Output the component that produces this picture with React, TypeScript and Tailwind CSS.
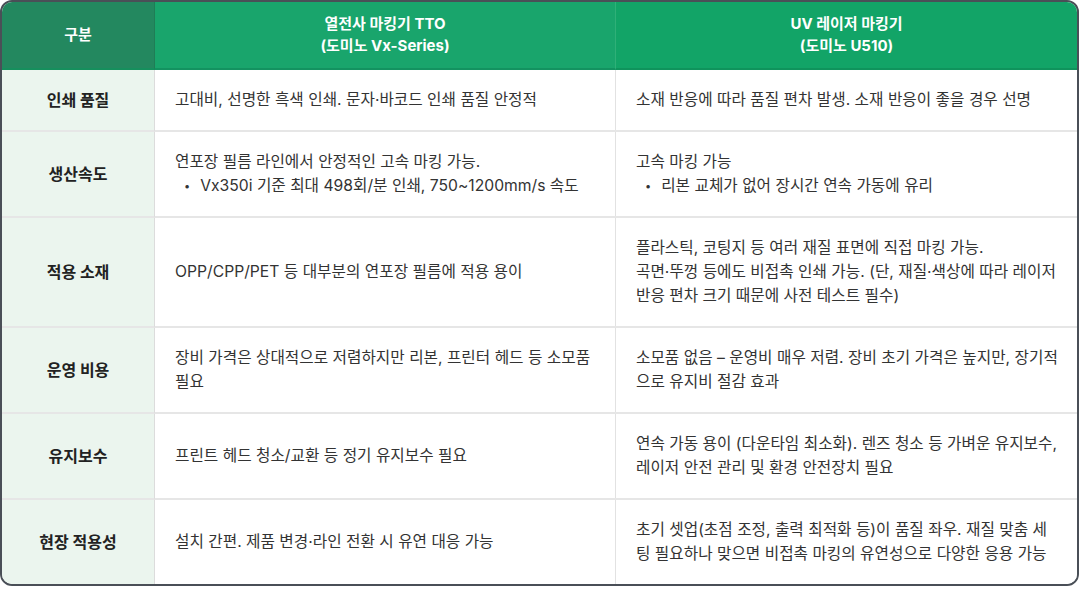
import React from "react";

type Cell = { text: string; bullets?: string[] };
type Row = { label: string; a: Cell; b: Cell };

const rows: Row[] = [
  {
    label: "인쇄 품질",
    a: { text: "고대비, 선명한 흑색 인쇄. 문자·바코드 인쇄 품질 안정적" },
    b: { text: "소재 반응에 따라 품질 편차 발생. 소재 반응이 좋을 경우 선명" },
  },
  {
    label: "생산속도",
    a: {
      text: "연포장 필름 라인에서 안정적인 고속 마킹 가능.",
      bullets: ["Vx350i 기준 최대 498회/분 인쇄, 750~1200mm/s 속도"],
    },
    b: { text: "고속 마킹 가능", bullets: ["리본 교체가 없어 장시간 연속 가동에 유리"] },
  },
  {
    label: "적용 소재",
    a: { text: "OPP/CPP/PET 등 대부분의 연포장 필름에 적용 용이" },
    b: {
      text: "플라스틱, 코팅지 등 여러 재질 표면에 직접 마킹 가능.\n곡면·뚜껑 등에도 비접촉 인쇄 가능. (단, 재질·색상에 따라 레이저 반응 편차 크기 때문에 사전 테스트 필수)",
    },
  },
  {
    label: "운영 비용",
    a: { text: "장비 가격은 상대적으로 저렴하지만 리본, 프린터 헤드 등 소모품 필요" },
    b: { text: "소모품 없음 – 운영비 매우 저렴. 장비 초기 가격은 높지만, 장기적으로 유지비 절감 효과" },
  },
  {
    label: "유지보수",
    a: { text: "프린트 헤드 청소/교환 등 정기 유지보수 필요" },
    b: { text: "연속 가동 용이 (다운타임 최소화). 렌즈 청소 등 가벼운 유지보수, 레이저 안전 관리 및 환경 안전장치 필요" },
  },
  {
    label: "현장 적용성",
    a: { text: "설치 간편. 제품 변경·라인 전환 시 유연 대응 가능" },
    b: { text: "초기 셋업(초점 조정, 출력 최적화 등)이 품질 좌우. 재질 맞춤 세팅 필요하나 맞으면 비접촉 마킹의 유연성으로 다양한 응용 가능" },
  },
];

function Body({ cell, last }: { cell: Cell; last?: boolean }) {
  return (
    <div
      className={`flex flex-col justify-center pl-[20px] pr-[18px] py-[18px] text-[15.7px] leading-[24px] text-[#333333] bg-white ${
        last ? "" : "border-r border-[#e2e2e2]"
      }`}
    >
      <div className="whitespace-pre-line">{cell.text}</div>
      {cell.bullets && (
        <ul className="pl-[9px]">
          {cell.bullets.map((b) => (
            <li key={b} className="flex items-center gap-[10px]">
              <span className="text-[11px] leading-[24px]">•</span>
              <span>{b}</span>
            </li>
          ))}
        </ul>
      )}
    </div>
  );
}

export default function App() {
  return (
    <div
      className="w-[1079px] bg-white"
      style={{ fontFamily: "Inter, 'Noto Sans CJK KR', 'Noto Sans', sans-serif" }}
    >
      <div className="overflow-hidden rounded-[12px] border-2 border-[#4a4f57]">
        <div className="grid grid-cols-[153px_1fr_1fr]">
          <div className="flex items-center justify-center bg-[#23885f] border-r border-[#1f7d56] border-b-2 border-b-[#168f5d] py-[11px] text-[15px] font-bold leading-[22px] text-white">
            구분
          </div>
          <div className="flex flex-col items-center justify-center bg-[#19a56c] border-r border-[#2fb078] border-b-2 border-b-[#139260] py-[11px] text-[15px] font-bold leading-[22px] text-white text-center">
            <div>열전사 마킹기 TTO</div>
            <div>(도미노 Vx-Series)</div>
          </div>
          <div className="flex flex-col items-center justify-center bg-[#12a467] border-b-2 border-b-[#0f935c] py-[11px] text-[15px] font-bold leading-[22px] text-white text-center">
            <div>UV 레이저 마킹기</div>
            <div>(도미노 U510)</div>
          </div>
          {rows.map((r, i) => {
            const border = i < rows.length - 1 ? "border-b-2 border-b-[#e6e6e6]" : "";
            return (
              <React.Fragment key={r.label}>
                <div
                  className={`flex items-center justify-center bg-[#ebf5ee] border-r border-[#dcdcdc] text-[16px] font-bold text-[#222222] ${border}`}
                >
                  {r.label}
                </div>
                <div className={`grid ${border}`}>
                  <Body cell={r.a} />
                </div>
                <div className={`grid ${border}`}>
                  <Body cell={r.b} last />
                </div>
              </React.Fragment>
            );
          })}
        </div>
      </div>
    </div>
  );
}
